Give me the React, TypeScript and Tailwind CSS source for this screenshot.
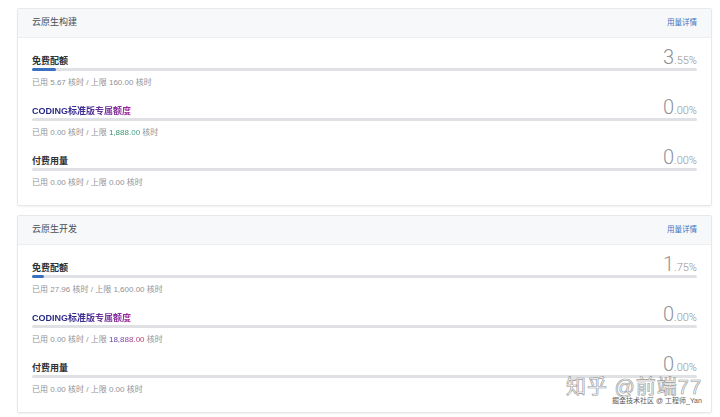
import React from "react";

type RowProps = {
  label: React.ReactNode;
  pctInt: string;
  pctDec: string;
  fill: number;
  used: string;
  limit: React.ReactNode;
};

function Row({ label, pctInt, pctDec, fill, used, limit }: RowProps) {
  return (
    <div className="mb-[8px]">
      <div className="flex h-[20px] items-baseline justify-between leading-[20px]">
        <div className="text-[9px] font-bold text-[#2f3033]">{label}</div>
        <div className="font-['Roboto','Liberation_Sans',sans-serif] text-[#909398]">
          <span className="text-[20px] font-light">{pctInt}</span>
          <span className="text-[11px] font-light">{pctDec}</span>
        </div>
      </div>
      <div className="mt-[1px] h-[3px] w-full rounded-full bg-[#dfe1e5]">
        <div className="h-[3px] rounded-full bg-[#3a70c0]" style={{ width: `${fill}%` }} />
      </div>
      <div className="mt-[6px] h-[12px] text-[8px] leading-[12px] text-[#8f9297]">
        已用 {used} 核时 / 上限 {limit} 核时
      </div>
    </div>
  );
}

function Coding() {
  return (
    <span className="bg-gradient-to-r from-[#17237a] via-[#3a2b92] to-[#a3259e] bg-clip-text text-transparent">
      CODING标准版专属额度
    </span>
  );
}

function Card({
  title,
  rows,
}: {
  title: string;
  rows: RowProps[];
}) {
  return (
    <div className="w-[695px] rounded-[2px] border border-[#e6e8ec] bg-white shadow-[0_1px_2px_rgba(0,0,0,0.06)]">
      <div className="flex h-[29px] items-center justify-between border-b border-[#eceef1] bg-[#f7f8fa] px-[14px]">
        <span className="text-[9px] text-[#4a4d52]">{title}</span>
        <span className="text-[7.5px] text-[#3a73c0]">用量详情</span>
      </div>
      <div className="px-[14px] pt-[9px] pb-[8px]">
        {rows.map((r, i) => (
          <Row key={i} {...r} />
        ))}
      </div>
    </div>
  );
}

export default function App() {
  return (
    <div className="relative h-[417px] w-[720px] overflow-hidden bg-white pt-[8px] pl-[17px] font-['Liberation_Sans','Noto_Sans_CJK_SC',sans-serif]">
      <div className="flex flex-col gap-[9px]">
        <Card
          title="云原生构建"
          rows={[
            { label: "免费配额", pctInt: "3", pctDec: ".55%", fill: 3.55, used: "5.67", limit: "160.00" },
            {
              label: <Coding />,
              pctInt: "0",
              pctDec: ".00%",
              fill: 0,
              used: "0.00",
              limit: (
                <span className="bg-gradient-to-r from-[#2c8a5c] to-[#3aa28a] bg-clip-text text-transparent">
                  1,888.00
                </span>
              ),
            },
            { label: "付费用量", pctInt: "0", pctDec: ".00%", fill: 0, used: "0.00", limit: "0.00" },
          ]}
        />
        <Card
          title="云原生开发"
          rows={[
            { label: "免费配额", pctInt: "1", pctDec: ".75%", fill: 1.75, used: "27.96", limit: "1,600.00" },
            {
              label: <Coding />,
              pctInt: "0",
              pctDec: ".00%",
              fill: 0,
              used: "0.00",
              limit: (
                <span className="bg-gradient-to-r from-[#4a3aa8] via-[#8a3a9a] to-[#c8324a] bg-clip-text text-transparent">
                  18,888.00
                </span>
              ),
            },
            { label: "付费用量", pctInt: "0", pctDec: ".00%", fill: 0, used: "0.00", limit: "0.00" },
          ]}
        />
      </div>
      <div className="absolute left-[566px] top-[376px] flex flex-col items-end">
        <div className="text-[20px] leading-[22px] tracking-[1px] text-white [-webkit-text-stroke:0.6px_#9a9a9a] [text-shadow:0_0_1px_rgba(0,0,0,0.15)]">
          知乎 @前端77
        </div>
      </div>
      <div className="absolute left-[612px] top-[396px] text-[7px] leading-[10px] text-[#5a5a5a]">
        掘金技术社区 @ 工程师_Yan
      </div>
    </div>
  );
}
